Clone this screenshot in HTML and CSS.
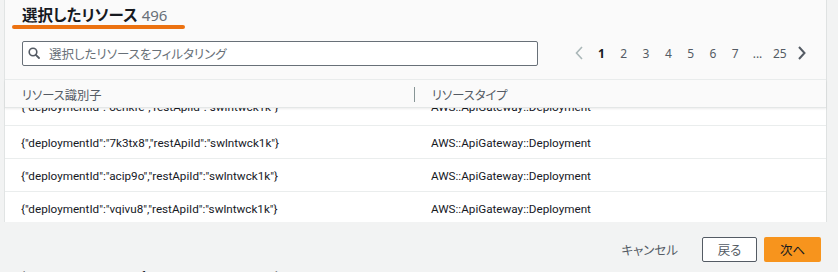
FILE: index.html
```html
<!DOCTYPE html>
<html lang="ja">
<head>
<meta charset="utf-8">
<link rel="stylesheet" href="styles.css">
</head>
<body>
<div class="panel">
  <div class="tabhead">
    <div class="tab"><span class="title">選択したリソース</span><span class="count">496</span></div>
  </div>
  <div class="toolbar">
    <div class="search">
      <svg class="sicon" width="12" height="12" viewBox="0 0 12 12"><circle cx="5" cy="5" r="3.8" fill="none" stroke="#545b64" stroke-width="1.6"/><path d="M7.8 7.8 L11 11" stroke="#545b64" stroke-width="1.8" stroke-linecap="round"/></svg>
      <span class="placeholder">選択したリソースをフィルタリング</span>
    </div>
    <div class="pager">
      <span class="pg"><svg width="8" height="14" viewBox="0 0 8 14"><path d="M7 1 L1.5 7 L7 13" fill="none" stroke="#aab7b8" stroke-width="1.6"/></svg></span>
      <span class="pg cur">1</span>
      <span class="pg">2</span>
      <span class="pg">3</span>
      <span class="pg">4</span>
      <span class="pg">5</span>
      <span class="pg">6</span>
      <span class="pg">7</span>
      <span class="pg">...</span>
      <span class="pg">25</span>
      <span class="pg"><svg width="8" height="14" viewBox="0 0 8 14"><path d="M1 1 L6.5 7 L1 13" fill="none" stroke="#545b64" stroke-width="2"/></svg></span>
    </div>
  </div>
  <div class="table">
    <div class="thead">
      <div class="c1">リソース識別子</div>
      <div class="sep"></div>
      <div class="c2">リソースタイプ</div>
    </div>
    <div class="viewport">
      <div class="rows">
        <div class="row first"><div class="c1">{"deploymentId":"oenkfe","restApiId":"swlntwck1k"}</div><div class="c2">AWS::ApiGateway::Deployment</div></div>
        <div class="row"><div class="c1">{"deploymentId":"7k3tx8","restApiId":"swlntwck1k"}</div><div class="c2">AWS::ApiGateway::Deployment</div></div>
        <div class="row"><div class="c1">{"deploymentId":"acip9o","restApiId":"swlntwck1k"}</div><div class="c2">AWS::ApiGateway::Deployment</div></div>
        <div class="row"><div class="c1">{"deploymentId":"vqivu8","restApiId":"swlntwck1k"}</div><div class="c2">AWS::ApiGateway::Deployment</div></div>
      </div>
    </div>
  </div>
</div>
<div class="footer">
  <span class="cancel">キャンセル</span>
  <span class="btn back">戻る</span>
  <span class="btn next">次へ</span>
</div>
<div class="peek">
  <div class="row"><div class="c1">{"deploymentId":"abcdef","restApiId":"swlntwck1k"}</div><div class="c2">AWS::ApiGateway::Deployment</div></div>
</div>
</body>
</html>
```
FILE: styles.css
```css
* { box-sizing: border-box; }
html, body { margin: 0; padding: 0; }
body {
  width: 838px;
  height: 272px;
  overflow: hidden;
  background: #f2f3f3;
  font-family: Roboto, "Noto Sans CJK JP", sans-serif;
  font-feature-settings: "palt";
  color: #16191f;
  font-size: 12px;
}
.panel {
  margin-left: 4px;
  width: 823px;
  background: #fafafa;
  border-left: 1px solid #e1e4e4;
  border-right: 1px solid #dfe2e2;
}
.tabhead { height: 31px; padding-top: 4px; }
.tab {
  display: inline-block;
  margin-left: 7px;
  width: 173px;
  padding-left: 10px;
  height: 25px;
  position: relative;
  white-space: nowrap;
}
.tab::after {
  content: "";
  position: absolute;
  left: 0; right: 0; bottom: 0;
  height: 4px;
  border-radius: 2px;
  background: #ec7211;
}
.title { font-size: 15.5px; font-weight: bold; line-height: 20px; font-family: "Noto Sans CJK JP", sans-serif; }
.count { font-size: 15px; color: #687078; margin-left: 4px; line-height: 20px; font-family: "Noto Sans", sans-serif; }
.toolbar {
  display: flex;
  align-items: center;
  height: 48px;
  padding-left: 17px;
  padding-bottom: 4px;
}
.search {
  width: 516px;
  height: 25px;
  background: #fff;
  border: 1px solid #687078;
  border-radius: 2px;
  display: flex;
  align-items: center;
  padding-left: 5px;
}
.sicon { margin-right: 9px; }
.placeholder { color: #687078; font-size: 12.5px; font-family: "Noto Sans CJK JP", sans-serif; }
.pager {
  display: flex;
  margin-left: 30px;
  align-items: center;
}
.pg {
  width: 22.3px;
  text-align: center;
  color: #545b64;
  font-size: 12px;
  font-family: "Noto Sans", sans-serif;
  display: flex;
  justify-content: center;
  align-items: center;
  height: 20px;
}
.pg.cur { color: #16191f; font-weight: bold; }
.table { border-top: 1px solid #eaeded; }
.thead {
  height: 28px;
  display: flex;
  align-items: center;
  background: #fafafa;
  border-bottom: 1px solid #e4e7e7;
  box-shadow: 0 1px 2px rgba(0,0,0,0.08);
  position: relative;
  z-index: 1;
  color: #545b64;
  font-size: 12.3px;
}
.thead .c1 { width: 409px; padding-left: 17px; padding-top: 3px; font-family: "Noto Sans CJK JP", sans-serif; }
.sep { width: 1px; height: 15px; background: #879596; margin-top: 1px; }
.thead .c2 { padding-left: 17px; padding-top: 3px; font-family: "Noto Sans CJK JP", sans-serif; }
.viewport { height: 114px; overflow: hidden; background: #fff; }
.rows { margin-top: -15px; }
.row {
  display: flex;
  align-items: center;
  height: 33px;
  border-bottom: 1px solid #eaeded;
  color: #16191f;
  font-size: 11.7px;
  padding-top: 1px;
}
.row.first { padding-top: 0; padding-bottom: 4px; }
.row .c1 { width: 410px; padding-left: 16px; }
.row .c2 { padding-left: 16px; }
.footer {
  display: flex;
  justify-content: flex-end;
  align-items: center;
  height: 46px;
  padding-top: 9px;
  padding-right: 17px;
}
.cancel { font-size: 12.5px; color: #545b64; margin-right: 24px; font-family: "Noto Sans CJK JP", sans-serif; }
.btn {
  height: 25px;
  border-radius: 2px;
  display: flex;
  align-items: center;
  justify-content: center;
  font-size: 12.5px;
  font-family: "Noto Sans CJK JP", sans-serif;
}
.back { width: 55px; background: #fff; border: 1px solid #545b64; color: #545b64; margin-right: 7px; }
.next { width: 57px; background: #f7941d; color: #16191f; }
.peek { height: 4px; overflow: hidden; margin-left: 5px; padding-top: 1px; }
.peek .row { border: 0; height: auto; display: flex; align-items: flex-start; padding: 0; }
.peek .row .c1 { padding-left: 16px; }
```
